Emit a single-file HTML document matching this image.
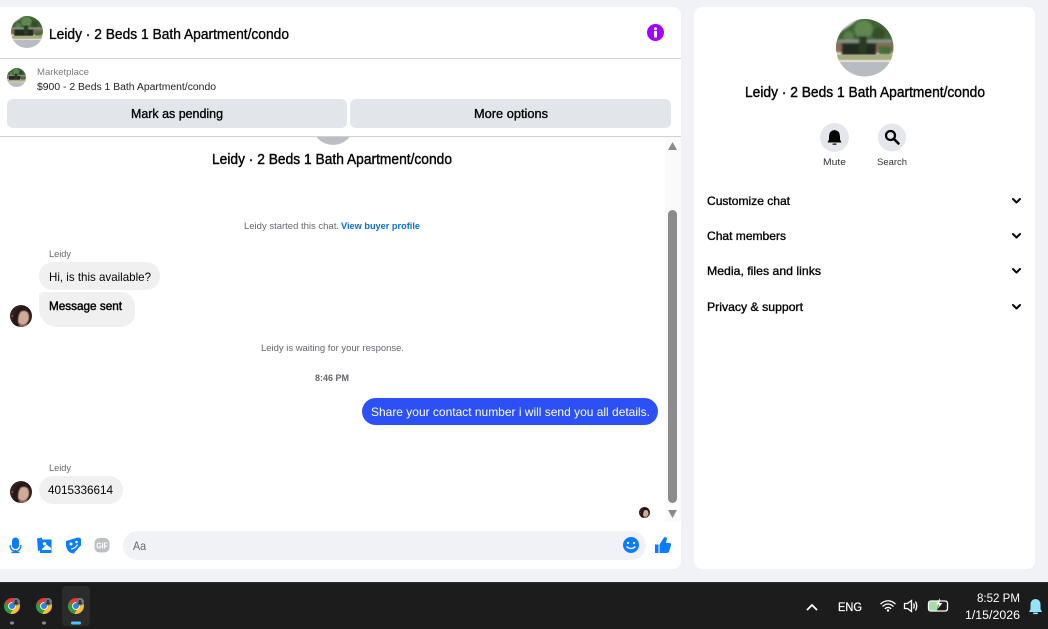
<!DOCTYPE html>
<html><head><meta charset="utf-8"><style>
html,body{margin:0;padding:0;width:1048px;height:629px;overflow:hidden;background:#f0f2f5}
svg{display:block}
text{font-family:"Liberation Sans",sans-serif;fill:#050505}
</style></head><body>
<svg width="1048" height="629" viewBox="0 0 1048 629" xmlns="http://www.w3.org/2000/svg">
<defs>
<clipPath id="c"><circle cx="50" cy="50" r="50"/></clipPath>
<filter id="b1"><feGaussianBlur stdDeviation="2"/></filter>
<symbol id="house" viewBox="0 0 100 100"><g clip-path="url(#c)">
<rect width="100" height="100" fill="#e2e6de"/>
<g filter="url(#b1)">
<path d="M-4 40L8 22L26 10L44 -4L75 -2L92 18L104 38V56H-4Z" fill="#3f6234"/>
<circle cx="48" cy="18" r="16" fill="#5f8750"/>
<circle cx="74" cy="26" r="11" fill="#324f2b"/>
<circle cx="22" cy="30" r="9" fill="#587e4a"/>
<rect x="2" y="36" width="96" height="5" fill="#8b9a8c"/>
<rect x="-2" y="42" width="104" height="16" fill="#8f6a58"/>
<rect x="10" y="42" width="60" height="21" fill="#242c20"/>
<rect x="74" y="47" width="22" height="15" fill="#466e38"/>
<rect x="40" y="30" width="14" height="30" fill="#2c3b24"/>
</g>
<rect y="62" width="100" height="11" fill="#a9ac7e"/>
<rect y="71" width="100" height="4" fill="#dcdcd4"/>
<rect y="75" width="100" height="25" fill="#b9bbc2"/>
</g></symbol>
<symbol id="p" viewBox="0 0 100 100"><g clip-path="url(#c)">
<rect width="100" height="100" fill="#33221f"/>
<g filter="url(#b1)">
<ellipse cx="58" cy="56" rx="28" ry="34" fill="#d2a898"/>
<path d="M18 100C10 55 22 10 62 8C88 8 98 32 92 52C80 26 66 24 50 30C36 44 36 76 40 100Z" fill="#241715"/>
<rect x="42" y="88" width="40" height="14" fill="#8c6458"/>
</g>
<circle cx="10" cy="50" r="5" fill="#a83028"/>
</g></symbol>
<symbol id="chrome" viewBox="0 0 16 16">
<circle cx="8" cy="8" r="8" fill="#e33b2e"/>
<path d="M8 8L1.100 4 .0 8A8 8 0 0 0 6.500 15.900Z" fill="#2e9e45"/>
<path d="M8 4.500H15A8 8 0 0 1 6.500 15.900L9.500 10Z" fill="#fbc02d"/>
<circle cx="8" cy="8" r="3.900" fill="#fff"/><circle cx="8" cy="8" r="3" fill="#2f7fe6"/>
<circle cx="12" cy="3.800" r="3.900" fill="#777"/><circle cx="12" cy="3" r="1.300" fill="#333"/><path d="M9.700 6.200a2.300 2.300 0 0 1 4.600 0" fill="#333"/>
</symbol>
</defs>

<rect x="-8" y="7" width="689" height="562" rx="8" fill="#fff"/>
<rect x="694" y="7" width="341" height="562" rx="8" fill="#fff"/>
<rect x="0" y="582" width="1048" height="47" fill="#1c1c1c"/>
<rect x="0" y="582" width="1048" height="1" fill="#2e2e2e"/>

<rect x="665" y="137" width="16" height="385" fill="#fafafa"/>
<circle cx="333" cy="124" r="21" fill="#bcbec4"/>
<rect x="0" y="58" width="681" height="78" fill="#fff"/>

<use href="#house" x="11" y="16" width="32" height="32"/>
<text x="49" y="39" font-size="14.500" stroke="#050505" stroke-width=".35" textLength="240" lengthAdjust="spacingAndGlyphs">Leidy · 2 Beds 1 Bath Apartment/condo</text>
<circle cx="655.500" cy="32.500" r="8.500" fill="#a400ff"/>
<circle cx="655.500" cy="28.800" r="1.500" fill="#fff"/><rect x="654" y="31" width="3" height="6.500" fill="#fff"/>
<rect x="0" y="58" width="681" height="1" fill="#cfd1d4"/>

<use href="#house" x="7" y="68" width="19" height="19"/>
<text x="37" y="75" font-size="9.500" style="fill:#7a7c80" textLength="52" lengthAdjust="spacingAndGlyphs">Marketplace</text>
<text x="37" y="90" font-size="10" style="fill:#222" textLength="179" lengthAdjust="spacingAndGlyphs">$900 - 2 Beds 1 Bath Apartment/condo</text>
<rect x="7" y="99" width="340" height="29" rx="6" fill="#e2e5e9"/>
<rect x="350" y="99" width="321" height="29" rx="6" fill="#e2e5e9"/>
<text x="131" y="118" font-size="12.500" stroke="#050505" stroke-width=".35" textLength="92" lengthAdjust="spacingAndGlyphs">Mark as pending</text>
<text x="474" y="118" font-size="12.500" stroke="#050505" stroke-width=".35" textLength="74" lengthAdjust="spacingAndGlyphs">More options</text>
<rect x="0" y="136" width="681" height="1" fill="#cfd1d4"/>

<text x="212" y="164" font-size="14.500" stroke="#050505" stroke-width=".4" textLength="240" lengthAdjust="spacingAndGlyphs">Leidy · 2 Beds 1 Bath Apartment/condo</text>
<text x="244" y="229" font-size="9.500" style="fill:#65676b" textLength="95" lengthAdjust="spacingAndGlyphs">Leidy started this chat.</text>
<text x="341" y="229" font-size="9.500" font-weight="700" style="fill:#0a6ecb" textLength="79" lengthAdjust="spacingAndGlyphs">View buyer profile</text>
<text x="49" y="257" font-size="9.500" style="fill:#65676b" textLength="22" lengthAdjust="spacingAndGlyphs">Leidy</text>

<rect x="39" y="262" width="121" height="28" rx="14" fill="#f0f0f0"/>
<path d="M43 292H121A14 14 0 0 1 135 306V313A14 14 0 0 1 121 327H57A18 18 0 0 1 39 309V296A4 4 0 0 1 43 292Z" fill="#f0f0f0"/>
<text x="49" y="281" font-size="12" textLength="102" lengthAdjust="spacingAndGlyphs">Hi, is this available?</text>
<text x="49" y="310" font-size="12" stroke="#050505" stroke-width=".45" textLength="73" lengthAdjust="spacingAndGlyphs">Message sent</text>
<use href="#p" x="10" y="305" width="22" height="22"/>

<text x="261" y="351" font-size="9.500" style="fill:#65676b" textLength="143" lengthAdjust="spacingAndGlyphs">Leidy is waiting for your response.</text>
<text x="315" y="381" font-size="9.500" font-weight="700" style="fill:#65676b" textLength="34" lengthAdjust="spacingAndGlyphs">8:46 PM</text>

<rect x="362" y="398" width="296" height="27" rx="13.500" fill="#2b50f5"/>
<text x="371" y="416" font-size="12" style="fill:#fff" textLength="279" lengthAdjust="spacingAndGlyphs">Share your contact number i will send you all details.</text>

<text x="49" y="471" font-size="9.500" style="fill:#65676b" textLength="22" lengthAdjust="spacingAndGlyphs">Leidy</text>
<rect x="39" y="476" width="84" height="28" rx="14" fill="#f0f0f0"/>
<text x="48" y="494" font-size="12" textLength="65" lengthAdjust="spacingAndGlyphs">4015336614</text>
<use href="#p" x="10" y="481" width="22" height="22"/>
<use href="#p" x="639" y="507" width="11" height="11"/>

<path d="M668 150L672.500 142L677 150Z" fill="#8b8b8b"/>
<rect x="668" y="210" width="9" height="293" rx="4.500" fill="#8b8b8b"/>
<path d="M668 510H677L672.500 518Z" fill="#8b8b8b"/>

<g fill="#0a7cff">
<rect x="12" y="537.500" width="7" height="11.500" rx="3.500"/>
<path d="M10.200 545V546A5.300 5.300 0 0 0 20.800 546V545" fill="none" stroke="#0a7cff" stroke-width="1.300"/>
<rect x="14.800" y="550" width="1.400" height="2"/><rect x="11.500" y="551.700" width="8" height="1.400"/>
<path d="M37 538.500L42 537.500L42 550L38 551Z"/>
<path d="M40 539.500H51.500V553H40Z"/>
<path d="M44.500 542a1.700 1.700 0 1 0 .01 0M42 549L46.500 544.500L51 548V550H42Z" fill="#fff"/>
<path d="M66 541L78 537.500Q81.500 537.500 81 540.500V546L75 553.500L71 553Q67 551 66 546Z"/>
<circle cx="71" cy="544" r="1.500" fill="#fff"/><circle cx="76.500" cy="542" r="1.300" fill="#fff"/>
<path d="M71 549Q75.500 548.500 77.500 544.500" stroke="#fff" stroke-width="1.200" fill="none"/>
<path d="M74.500 553.500L81 546" stroke="#fff" stroke-width="1.300"/>
</g>
<rect x="94.500" y="538" width="15" height="14.500" rx="5" fill="#bcc0c4"/>
<text x="96.300" y="548.700" font-size="8.500" font-weight="700" style="fill:#fff" textLength="11.500" lengthAdjust="spacingAndGlyphs">GIF</text>

<rect x="123" y="531" width="523" height="29" rx="14.500" fill="#f0f2f5"/>
<text x="133" y="550" font-size="12" style="fill:#65676b" textLength="13" lengthAdjust="spacingAndGlyphs">Aa</text>
<circle cx="631" cy="545" r="8" fill="#0a7cff"/>
<circle cx="628" cy="543" r="1.100" fill="#fff"/><circle cx="634" cy="543" r="1.100" fill="#fff"/>
<path d="M626.500 546.500Q631 550.500 635.500 546.500" stroke="#fff" stroke-width="1.200" fill="none"/>
<path d="M655 544.500H658.500V553H655Z" fill="#0a7cff"/>
<path d="M659.500 544.500L664 537.500Q666 536.500 667 538.500L666 543H670Q671.500 543.500 671 545.500L669 551.500Q668.500 553 667 553H659.500Z" fill="#0a7cff"/>

<use href="#house" x="836" y="19" width="57.500" height="57.500"/>
<text x="745" y="97" font-size="14.500" stroke="#050505" stroke-width=".4" textLength="240" lengthAdjust="spacingAndGlyphs">Leidy · 2 Beds 1 Bath Apartment/condo</text>

<circle cx="834.500" cy="137.500" r="14.500" fill="#e4e6eb"/>
<circle cx="892" cy="137.500" r="14" fill="#e4e6eb"/>
<path d="M834.500 130Q839.500 130.500 840 136V139.500L841.500 142.500H827.500L829 139.500V136Q829.500 130.500 834.500 130Z" fill="#050505"/>
<rect x="832.500" y="143.500" width="4" height="1.300" rx=".6" fill="#050505"/>
<circle cx="890.500" cy="135.500" r="4.500" fill="none" stroke="#050505" stroke-width="2.200"/>
<path d="M894 139L898.500 143.500" stroke="#050505" stroke-width="2.600" stroke-linecap="round"/>
<text x="823" y="165" font-size="9.500" style="fill:#333" textLength="23" lengthAdjust="spacingAndGlyphs">Mute</text>
<text x="877" y="165" font-size="9.500" style="fill:#333" textLength="30" lengthAdjust="spacingAndGlyphs">Search</text>

<g font-size="12" stroke="#050505" stroke-width=".35">
<text x="707" y="205" textLength="83" lengthAdjust="spacingAndGlyphs">Customize chat</text>
<text x="707" y="240" textLength="79" lengthAdjust="spacingAndGlyphs">Chat members</text>
<text x="707" y="275" textLength="114" lengthAdjust="spacingAndGlyphs">Media, files and links</text>
<text x="707" y="311" textLength="96" lengthAdjust="spacingAndGlyphs">Privacy &amp; support</text>
</g>
<g fill="none" stroke="#050505" stroke-width="2" stroke-linecap="round" stroke-linejoin="round">
<path d="M1013 199L1016.500 202.500L1020 199"/>
<path d="M1013 234L1016.500 237.500L1020 234"/>
<path d="M1013 269L1016.500 272.500L1020 269"/>
<path d="M1013 305L1016.500 308.500L1020 305"/>
</g>

<rect x="62" y="586" width="28" height="40" rx="4" fill="#2b2b2b"/>
<use href="#chrome" x="4" y="598" width="16" height="16"/>
<use href="#chrome" x="36" y="598" width="16" height="16"/>
<use href="#chrome" x="68" y="598" width="16" height="16"/>
<rect x="10" y="621.500" width="4" height="3" rx="1.500" fill="#8a8a8a"/>
<rect x="42" y="621.500" width="4" height="3" rx="1.500" fill="#8a8a8a"/>
<rect x="71" y="621.500" width="10" height="3" rx="1.500" fill="#4cc2ff"/>

<path d="M807 610L812 605L817 610" fill="none" stroke="#fff" stroke-width="1.800"/>
<text x="838" y="611" font-size="11.500" stroke="#fff" stroke-width=".2" style="fill:#fff" textLength="24" lengthAdjust="spacingAndGlyphs">ENG</text>
<g fill="none" stroke="#fff" stroke-width="1.300">
<path d="M880.500 604Q888 597.500 895.500 604"/><path d="M882.500 606.500Q888 601.500 893.500 606.500"/><path d="M884.800 608.800Q888 606 891.200 608.800"/>
<path d="M904.500 603.500H907.500L911.500 600.500V611.500L907.500 608.500H904.500Z"/>
<path d="M913.500 603.500Q915 606 913.500 608.500"/><path d="M915.500 601.500Q918 606 915.500 610.500"/>
<path d="M931 601H945Q947.500 601 947.500 603.500V608.500Q947.500 611 945 611H931Q928.500 611 928.500 608.500V603.500Q928.500 601 931 601Z"/>
</g>
<circle cx="888" cy="610.500" r="1.200" fill="#fff"/>
<path d="M929 601.500H939L937 610.500H929Z" fill="#a5dfa5"/>
<path d="M940 598L936 604.500H939L937.500 609L942.500 603H939.500Z" fill="#fff"/>
<text x="977" y="602" font-size="11.500" style="fill:#fff" textLength="43" lengthAdjust="spacingAndGlyphs">8:52 PM</text>
<text x="965" y="619" font-size="11.500" style="fill:#fff" textLength="55" lengthAdjust="spacingAndGlyphs">1/15/2026</text>
<path d="M1035.500 599Q1040.500 599.500 1040.500 604.500V609L1042 612H1029L1030.500 609V604.500Q1030.500 599.500 1035.500 599Z" fill="#93e3fd"/>
<rect x="1033" y="612.500" width="5" height="1.600" rx=".8" fill="#93e3fd"/>
</svg>
</body></html>
